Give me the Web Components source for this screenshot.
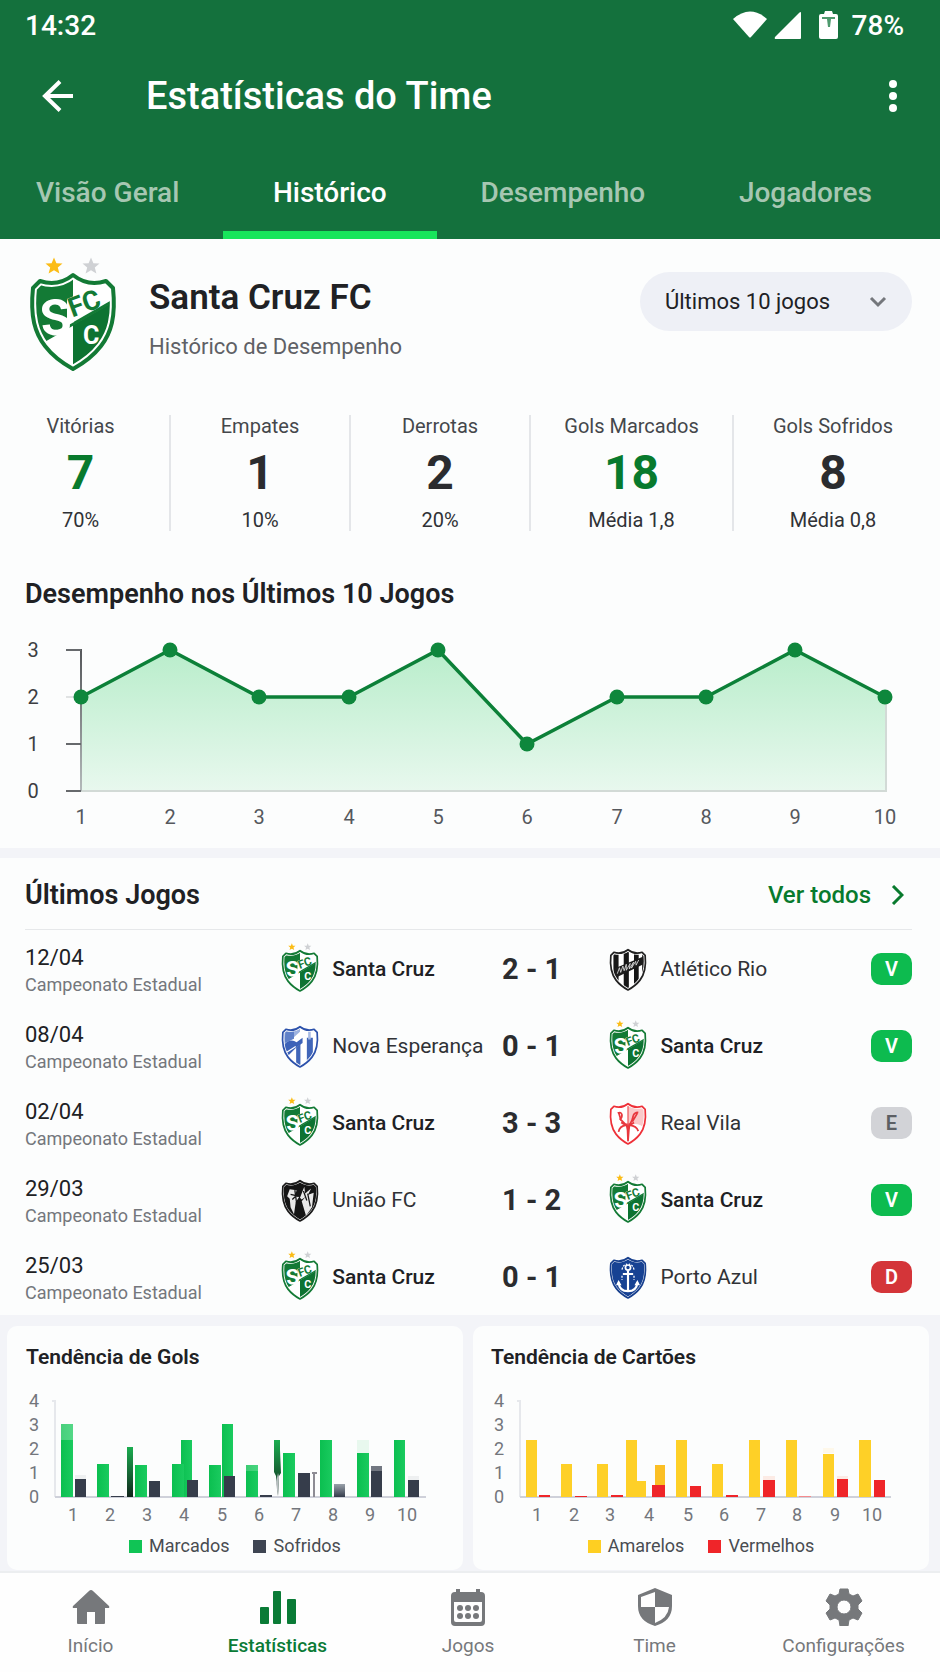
<!DOCTYPE html>
<html lang="pt-BR">
<head>
<meta charset="utf-8">
<meta name="viewport" content="width=device-width, initial-scale=1">
<title>Estatísticas do Time</title>
<style>
    body {
        margin: 0;
        background: #fcfdfd;
        color: #202124;
        font-family: Roboto, "Liberation Sans", sans-serif;
    }
</style>
</head>
<body>
<app-header heading="Estatísticas do Time" time="14:32" battery="78%"></app-header>
<main>
    <team-summary name="Santa Cruz FC" subtitle="Histórico de Desempenho"></team-summary>
    <stat-strip>
        <stat-item label="Vitórias" value="7" note="70%" highlight></stat-item>
        <stat-item label="Empates" value="1" note="10%"></stat-item>
        <stat-item label="Derrotas" value="2" note="20%"></stat-item>
        <stat-item label="Gols Marcados" value="18" note="Média 1,8" highlight></stat-item>
        <stat-item label="Gols Sofridos" value="8" note="Média 0,8"></stat-item>
    </stat-strip>
    <line-chart points="2,3,2,2,3,1,2,2,3,2">Desempenho nos Últimos 10 Jogos</line-chart>
    <match-list>Últimos Jogos</match-list>
    <trend-panel>
        <trend-chart id="goals">Tendência de Gols</trend-chart>
        <trend-chart id="cards">Tendência de Cartões</trend-chart>
    </trend-panel>
</main>
<bottom-nav></bottom-nav>

<script>
function attach(el, html) {
    const template = document.createElement('template');
    template.innerHTML = html;
    el.attachShadow({ mode: 'open' });
    el.shadowRoot.appendChild(template.content.cloneNode(true));
}

class AppHeader extends HTMLElement {
    connectedCallback() {
        if (this.shadowRoot) return;
        attach(this, `
            <style>
                :host { display: block; background: #14713d; color: #fff; }
                .status { display: flex; align-items: center; height: 50px; padding: 0 36px 0 25px; font-size: 28px; font-weight: 500; }
                .time { flex: 1; }
                .status svg { display: block; margin-right: 14px; }
                .status .signal { margin-right: 18px; }
                .bar { display: flex; align-items: center; height: 92px; padding: 0 34px 0 36px; }
                h1 { flex: 1; margin: 0 0 0 66px; font-size: 38px; font-weight: 500; }
                button { display: block; padding: 6px; border: 0; background: none; color: inherit; font: inherit; cursor: pointer; }
                button svg { display: block; }
                nav { display: flex; justify-content: space-between; height: 97px; padding: 0 68px 0 36px; }
                a { position: relative; line-height: 102px; font-size: 28px; font-weight: 500; color: #a6c7b2; text-decoration: none; }
                a[aria-current] { color: #fff; }
                a[aria-current]::after {
                    content: ""; position: absolute; left: -50px; right: -50px; bottom: 0;
                    height: 8px; background: #17e55b;
                }
            </style>
            <div class="status">
                <span class="time">${this.getAttribute('time')}</span>
                <svg class="signal" width="68" height="28" viewBox="0 0 68 28" fill="#fff" aria-hidden="true">
                    <path d="M0 8Q17-7 34 8L18 26q-1 1-2 0z"/>
                    <path d="M68 2v25q0 1-1 1H43q-2 0-1-2L66 2q2-2 2 0z"/>
                </svg>
                <svg width="19" height="28" viewBox="0 0 19 28" fill="#fff" aria-hidden="true">
                    <path d="M6 0h7l1 3h3q2 0 2 2v21q0 2-2 2H2q-2 0-2-2V5q0-2 2-2h3z"/>
                    <path d="M3 6h13v2h-4l-1 8H9L8 8H3z" fill="#4f9a6e"/>
                </svg>
                <span>${this.getAttribute('battery')}</span>
            </div>
            <div class="bar">
                <button type="button" aria-label="Voltar">
                    <svg width="32" height="32" viewBox="0 0 32 32" fill="none" stroke="#fff" stroke-width="4">
                        <path d="M31 16H3M18 1.500L3 16l15 14.500"/>
                    </svg>
                </button>
                <h1>${this.getAttribute('heading')}</h1>
                <button type="button" aria-label="Mais opções">
                    <svg width="14" height="32" viewBox="0 0 14 32" fill="#fff">
                        <circle cx="7" cy="4" r="4"/><circle cx="7" cy="16" r="4"/><circle cx="7" cy="28" r="4"/>
                    </svg>
                </button>
            </div>
            <nav>
                <a href="#geral">Visão Geral</a>
                <a href="#historico" aria-current="page">Histórico</a>
                <a href="#desempenho">Desempenho</a>
                <a href="#jogadores">Jogadores</a>
            </nav>
        `);
    }
}
customElements.define('app-header', AppHeader);

// Every crest shares the same shield, stars sit above it for Santa Cruz
const SHIELD = 'M42 18Q27 30 9 24L2 31C-1 60 4 76 14 89Q24 102 42 112Q60 102 70 89C80 76 85 60 82 31L75 24Q57 30 42 18Z';
const STAR = 'M0-8.500L2.400-2.800L8.500-2.400L3.800 1.500L5.400 7.500L0 4.200L-5.400 7.500L-3.800 1.500L-8.500-2.400L-2.400-2.800Z';

const CRESTS = {
    santacruz: {
        edge: '#137a35', base: '#fff',
        art: `
            <path d="M0 0H42V68L0 92Z" fill="#137a35"/>
            <path d="M42 68L84 44V120H42Z" fill="#0d7332"/>
            <path d="M0 91L84 43" stroke="#137a35" stroke-width="3"/>
            <path d="M36 42l7-3v26l-7 4z" fill="#fff"/>
            <g font-family="Roboto, sans-serif" font-weight="700">
                <text x="9" y="78" font-size="50" fill="#fff" transform="rotate(-6 25 60)">S</text>
                <text x="37" y="55" font-size="27" fill="#137a35" transform="rotate(-20 55 46)">FC</text>
                <text x="52" y="87" font-size="25" fill="#fff">C</text>
            </g>`
    },
    atletico: {
        edge: '#222', base: '#fff',
        art: `
            <path d="M8 0h12v120H8zM32 0h12v120H32zM56 0h11v120H56zM75 0h9v120h-9z" fill="#161616"/>
            <path d="M10 62L78 34v18L12 84z" fill="#1c1c1c"/>
            <path d="M17 74l5-14 3 11 5-15 3 11 5-15v14l9-16-2 13 10-16-5 14 10-16 1 9 6-12" stroke="#ddd" stroke-width="2" fill="none"/>`
    },
    nova: {
        edge: '#2c51ab', base: '#fff',
        art: `
            <path d="M0 0h42v30L6 62z" fill="#9db2df"/>
            <path d="M8 28h20v18l-22 10z" fill="#5f80c8"/>
            <path d="M4 62q14-18 30-8l14-10v12L34 66 12 88z" fill="#3d62b8"/>
            <path d="M33 66l10-8v60L33 108zM58 44h14v52l-14 10z" fill="#4166b9"/>
            <path d="M64 24v24" stroke="#aabce4" stroke-width="6"/>
            <path d="M10 78l22-14" stroke="#fff" stroke-width="3"/>`
    },
    vila: {
        edge: '#ee3038', base: '#fff',
        art: `
            <path d="M42 18h42v60q-20-20-42-8z" fill="#fac9c9"/>
            <path d="M18 40q8-4 10 4 0 8-4 10l14 14M66 38q-10 0-12 9-1 8-8 20M20 84q2-14 18-16h8q16 2 20 14M20 38l6 20M64 40l-12 20M26 62l14 8M56 62l-12 8" fill="none" stroke="#e8373d" stroke-width="4"/>
            <path d="M36 64h12l-2 16-2 26h-4l-1-26z" fill="#e8373d"/>
            <path d="M42 22v46" stroke="#ee5a5e" stroke-width="3"/>`
    },
    uniao: {
        edge: '#1c1c1c', base: '#151515',
        art: `
            <path d="M18 38l16 2-4 14 10 2-8 12-4 28-8-16-2-20-6-6zM46 66l12-14 16-6-4 34-14 20zM42 58l10-26 2 16 14-12-8 16-14 10z" fill="#e9e9e9"/>
            <path d="M20 50l18 4M24 62l12-12M60 48l6 30M30 40l4 30M50 42l8 22" stroke="#151515" stroke-width="3"/>`
    },
    porto: {
        edge: '#173f8d', base: '#174293',
        art: `
            <g stroke="#fff" fill="none" stroke-width="5">
                <circle cx="42" cy="41" r="6" stroke-width="4"/>
                <path d="M42 48v48M30 56h24M20 76q2 20 22 20t22-20"/>
                <path d="M28 46q2-12 12-13M56 46q-2-12-12-13M28 60v10M56 60v10" stroke-width="3" stroke-dasharray="5 3"/>
            </g>
            <path d="M14 82l6-12 7 12zM57 82l7-12 6 12z" fill="#fff"/>`
    }
};
let crestCount = 0;

class TeamCrest extends HTMLElement {
    connectedCallback() {
        if (this.shadowRoot) return;
        const kind = this.getAttribute('kind');
        const crest = CRESTS[kind];
        const clip = 'shield' + (++crestCount);
        const starred = kind === 'santacruz';
        const stars = !starred ? '' : `
            <path d="${STAR}" fill="#fbbc16" transform="translate(23 9)"/>
            <path d="${STAR}" fill="#cfd1d4" transform="translate(60 9)"/>`;
        // dark shields carry only a hairline inside the edge
        const inner = kind === 'porto' || kind === 'uniao' ? 6 : 8;
        attach(this, `
            <style>
                :host { display: block; flex: none; width: 84px; }
                svg { display: block; width: 100%; overflow: visible; }
            </style>
            <svg viewBox="${starred ? '0 0 84 114' : '0 14 84 100'}" aria-hidden="true">
                <clipPath id="${clip}"><path d="${SHIELD}"/></clipPath>
                ${stars}
                <path d="${SHIELD}" fill="${crest.base}"/>
                <g clip-path="url(#${clip})">
                    ${crest.art}
                    <path d="${SHIELD}" fill="none" stroke="#fff" stroke-width="${inner}"/>
                </g>
                <path d="${SHIELD}" fill="none" stroke="${crest.edge}" stroke-width="4" stroke-linejoin="round"/>
            </svg>
        `);
    }
}
customElements.define('team-crest', TeamCrest);

class TeamSummary extends HTMLElement {
    connectedCallback() {
        if (this.shadowRoot) return;
        attach(this, `
            <style>
                :host { display: flex; align-items: flex-start; padding: 18px 28px 0 31px; }
                .text { flex: 1; padding: 21px 0 0 34px; }
                h2 { margin: 0; font-size: 35px; line-height: 40px; font-weight: 600; }
                p { margin: 17px 0 0; font-size: 22px; line-height: 24px; color: #5f6166; }
                .period { position: relative; margin-top: 15px; }
                select {
                    appearance: none; display: block; width: 272px; height: 59px; padding: 0 60px 0 25px;
                    border: 0; border-radius: 30px; background: #eef0f6; color: #202124;
                    font-family: inherit; font-size: 22px;
                }
                .period svg { position: absolute; right: 25px; top: 24px; pointer-events: none; }
            </style>
            <team-crest kind="santacruz"></team-crest>
            <div class="text">
                <h2>${this.getAttribute('name')}</h2>
                <p>${this.getAttribute('subtitle')}</p>
            </div>
            <div class="period">
                <select aria-label="Período"><option>Últimos 10 jogos</option></select>
                <svg width="18" height="12" viewBox="0 0 18 12" fill="none" stroke="#74777c" stroke-width="3"><path d="M2 2l7 7 7-7"/></svg>
            </div>
        `);
    }
}
customElements.define('team-summary', TeamSummary);

class StatStrip extends HTMLElement {
    constructor() {
        super();
        attach(this, `
            <style>
                :host { display: grid; grid-template-columns: 171fr 180fr 180fr 203fr 206fr; margin-top: 44px; }
                ::slotted(:not(:last-child)) { border-right: 2px solid #e4e6e9; }
                ::slotted(:first-child), ::slotted(:last-child) { padding-right: 8px; }
            </style>
            <slot></slot>
        `);
    }
}
customElements.define('stat-strip', StatStrip);

class StatItem extends HTMLElement {
    connectedCallback() {
        if (this.shadowRoot) return;
        attach(this, `
            <style>
                :host { display: block; text-align: center; font-size: 20px; line-height: 22px; }
                .label { color: #44474b; }
                .value { margin: 8px 0; font-size: 48px; line-height: 56px; font-weight: 700; color: #2b2c2f; }
                :host([highlight]) .value { color: #087a2d; }
                .note { color: #303236; }
            </style>
            <div class="label">${this.getAttribute('label')}</div>
            <div class="value">${this.getAttribute('value')}</div>
            <div class="note">${this.getAttribute('note')}</div>
        `);
    }
}
customElements.define('stat-item', StatItem);

class LineChart extends HTMLElement {
    connectedCallback() {
        if (this.shadowRoot) return;
        const values = this.getAttribute('points').split(',').map(Number);
        const xs = values.map((v, i) => Math.floor(81 + i * 804 / (values.length - 1)));
        const y = v => 161 - v * 47;
        const line = values.map((v, i) => `${xs[i]},${y(v)}`).join(' ');
        attach(this, `
            <style>
                :host { display: block; }
                h2 { margin: 47px 25px 20px; font-size: 27px; line-height: 32px; font-weight: 600; }
                svg { display: block; width: 100%; }
                text { font-size: 20px; text-anchor: middle; fill: #55585d; }
                .scale text { fill: #3c3e42; }
            </style>
            <h2><slot></slot></h2>
            <svg viewBox="0 0 940 218">
                <defs>
                    <linearGradient id="area" x1="0" y1="0" x2="0" y2="1">
                        <stop offset="0" stop-color="#b9edcb"/><stop offset="1" stop-color="#e8f8ee"/>
                    </linearGradient>
                    <linearGradient id="axis" x1="0" y1="0" x2="0" y2="1">
                        <stop offset="0" stop-color="#55575a"/><stop offset="1" stop-color="#b4babb"/>
                    </linearGradient>
                </defs>
                <polygon points="81,161 ${line} 885,161" fill="url(#area)"/>
                <path d="M81 161H886V67" fill="none" stroke="#d2dad6" stroke-width="2"/>
                <rect x="80" y="19" width="2" height="142" fill="url(#axis)"/>
                <path d="M66 20h15M66 114h15M66 161h15" stroke="#66696c" stroke-width="2"/>
                <path d="M66 67h15" stroke="#c5c9ca"/>
                <g class="scale">${[3, 2, 1, 0].map(v => `<text x="33" y="${y(v) + 7}">${v}</text>`).join('')}</g>
                ${xs.map((x, i) => `<text x="${x}" y="194">${i + 1}</text>`).join('')}
                <polyline points="${line}" fill="none" stroke="#0c8038" stroke-width="3.500"/>
                ${values.map((v, i) => `<circle cx="${xs[i]}" cy="${y(v)}" r="7.500" fill="#0e873c"/>`).join('')}
            </svg>
        `);
    }
}
customElements.define('line-chart', LineChart);

const MATCHES = [
    { date: '12/04', home: ['santacruz', 'Santa Cruz'], score: '2 - 1', away: ['atletico', 'Atlético Rio'], result: 'V' },
    { date: '08/04', home: ['nova', 'Nova Esperança'], score: '0 - 1', away: ['santacruz', 'Santa Cruz'], result: 'V' },
    { date: '02/04', home: ['santacruz', 'Santa Cruz'], score: '3 - 3', away: ['vila', 'Real Vila'], result: 'E' },
    { date: '29/03', home: ['uniao', 'União FC'], score: '1 - 2', away: ['santacruz', 'Santa Cruz'], result: 'V' },
    { date: '25/03', home: ['santacruz', 'Santa Cruz'], score: '0 - 1', away: ['porto', 'Porto Azul'], result: 'D' }
];

class MatchList extends HTMLElement {
    team([kind, name]) {
        const own = kind === 'santacruz' ? ' own' : '';
        return `<div class="team${own}"><team-crest kind="${kind}"></team-crest>${name}</div>`;
    }

    connectedCallback() {
        if (this.shadowRoot) return;
        attach(this, `
            <style>
                :host { display: block; padding: 0 28px 0 25px; border-top: 10px solid #f3f4f8; }
                header { display: flex; justify-content: space-between; align-items: center; height: 69px; padding-top: 2px; border-bottom: 1px solid #e6e8ea; }
                h2 { margin: 0; font-size: 27px; line-height: 32px; font-weight: 600; }
                a { display: flex; align-items: center; gap: 20px; padding-right: 8px; font-size: 24px; line-height: 32px; font-weight: 500; color: #087a2d; text-decoration: none; }
                table { width: 100%; table-layout: fixed; border-collapse: collapse; }
                td { height: 77px; padding: 0; font-size: 21px; }
                .when { width: 29%; }
                .home { width: 24%; }
                .goals { width: 13%; }
                .end { width: 5%; }
                time { display: block; padding-top: 4px; font-size: 22px; line-height: 28px; }
                small { display: block; font-size: 18px; line-height: 26px; color: #74777c; }
                .team { display: flex; align-items: center; gap: 14px; white-space: nowrap; color: #303236; }
                .own { font-weight: 500; color: #202124; }
                team-crest { width: 36px; margin-top: 2px; }
                team-crest[kind="santacruz"] { margin-top: -3px; }
                .score { padding-left: 7px; font-size: 29px; font-weight: 700; color: #2b2c2f; white-space: nowrap; }
                .badge {
                    display: block; width: 41px; margin-left: auto; border-radius: 10px; text-align: center;
                    font-size: 20px; line-height: 32px; font-weight: 600; color: #fff; background: #0dbb4f;
                }
                .badge.E { background: #d2d3d7; color: #5c5f64; }
                .badge.D { background: #d43539; }
            </style>
            <header>
                <h2><slot></slot></h2>
                <a href="#jogos">Ver todos
                    <svg width="13" height="20" viewBox="0 0 13 20" fill="none" stroke="#087a2d" stroke-width="3"><path d="M2 1l9 9-9 9"/></svg>
                </a>
            </header>
            <table>
                <colgroup><col class="when"><col class="home"><col class="goals"><col><col class="end"></colgroup>
                ${MATCHES.map(m => `
                    <tr>
                        <td><time>${m.date}</time><small>Campeonato Estadual</small></td>
                        <td>${this.team(m.home)}</td>
                        <td class="score">${m.score}</td>
                        <td>${this.team(m.away)}</td>
                        <td><span class="badge ${m.result}">${m.result}</span></td>
                    </tr>`).join('')}
            </table>
        `);
    }
}
customElements.define('match-list', MatchList);

class TrendPanel extends HTMLElement {
    constructor() {
        super();
        attach(this, `
            <style>
                :host {
                    display: grid; grid-template-columns: 1fr 1fr; gap: 10px;
                    padding: 11px 11px 1px 7px; background: #f3f4f8;
                }
            </style>
            <slot></slot>
        `);
    }
}
customElements.define('trend-panel', TrendPanel);

class TrendChart extends HTMLElement {
    // bars: [x, top, width, colour], drawn in order down to the zero line
    set data({ axis, labels, legend, bars, extra }) {
        const zero = 128;
        attach(this, `
            <style>
                :host { display: block; padding: 19px 0 14px; border-radius: 10px; background: #fcfdfd; }
                h3 { margin: 0 20px 0 ${axis - 29}px; font-size: 21px; line-height: 24px; font-weight: 600; }
                svg { display: block; width: 100%; }
                text { font-size: 18px; text-anchor: middle; fill: #73767c; }
                ul { display: flex; justify-content: center; gap: 24px; margin: 0; padding: 0; list-style: none; font-size: 18px; line-height: 20px; color: #494c51; }
                li { display: flex; align-items: center; gap: 7px; }
                i { width: 13px; height: 13px; }
            </style>
            <h3><slot></slot></h3>
            <svg viewBox="0 0 456 167">
                <defs>
                    <linearGradient id="green"><stop offset="0" stop-color="#0bbf50"/><stop offset="1" stop-color="#1acb5f"/></linearGradient>
                    <linearGradient id="fade" x1="0" y1="0" x2="0" y2="1"><stop offset="0" stop-color="#9aa2ab"/><stop offset="1" stop-color="#343c4b"/></linearGradient>
                    <linearGradient id="shade" x1="0" y1="0" x2="0" y2="1"><stop offset="0" stop-color="#1bad50"/><stop offset=".6" stop-color="#155e31"/><stop offset="1" stop-color="#10241a"/></linearGradient>
                </defs>
                <path d="M${axis - 3} 32h3V${zero}" fill="none" stroke="#e6e8ec" stroke-width="2"/>
                <path d="M${axis} ${zero}h371" stroke="#cfd1da" stroke-width="2"/>
                ${bars.map(([x, top, w, fill]) => `<rect x="${x}" y="${top}" width="${w}" height="${zero - top}" fill="${fill}"/>`).join('')}
                ${extra || ''}
                ${[4, 3, 2, 1, 0].map(v => `<text x="${axis - 21}" y="${zero - v * 24 + 6}">${v}</text>`).join('')}
                ${labels.map((x, i) => `<text x="${x}" y="152">${i + 1}</text>`).join('')}
            </svg>
            <ul>${legend.map(([name, color]) => `<li><i style="background:${color}"></i>${name}</li>`).join('')}</ul>
        `);
    }
}
customElements.define('trend-chart', TrendChart);

const G = 'url(#green)', K = '#363d4b', Y = '#fed027', R = '#ef2529';

document.querySelector('#goals').data = {
    axis: 48,
    labels: [66, 103, 140, 177, 215, 252, 289, 326, 363, 400],
    legend: [['Marcados', '#10c455'], ['Sofridos', '#3e4552']],
    bars: [
        [54, 55, 12, G], [68, 110, 11, K],
        [90, 95, 12, G], [104, 127, 13, K],
        [120, 78, 6, 'url(#shade)'], [128, 96, 12, G], [142, 112, 11, K],
        [174, 71, 11, G], [165, 95, 12, G], [180, 111, 11, K],
        [215, 55, 11, G], [202, 96, 12, G], [217, 107, 11, K],
        [239, 96, 12, G], [253, 126, 12, K],
        [276, 84, 12, G], [291, 104, 12, K],
        [313, 71, 12, G], [327, 115, 11, 'url(#fade)'],
        [350, 84, 12, G], [364, 97, 11, K],
        [387, 71, 11, G], [401, 111, 11, K]
    ],
    extra: `
        <path d="M54 55h12v16H54z" fill="#fff" opacity=".25"/>
        <path d="M350 71h12v13h-12z" fill="#e8f8ee"/>
        <path d="M68 106h11v4H68zM401 107h11v4h-11z" fill="#eef0f1"/>
        <path d="M364 97h11v5h-11z" fill="#fff" opacity=".3"/>
        <path d="M239 96h12v6h-12z" fill="#fff" opacity=".2"/>
        <path d="M267 71h6v10l1 23-2 3-1 20-2-20-2-4z" fill="url(#shade)"/>
        <path d="M271 104l1 4-1 19-2-13z" fill="#b9bfc1"/>
        <path d="M305 104h5M307 104v24" stroke="#8d8c94" stroke-width="2"/>`
};

document.querySelector('#cards').data = {
    axis: 47,
    labels: [64, 101, 137, 176, 215, 251, 288, 324, 362, 399],
    legend: [['Amarelos', '#fecf22'], ['Vermelhos', '#ef2529']],
    bars: [
        [53, 71, 11, Y], [66, 126, 11, R],
        [88, 95, 11, Y], [102, 127, 12, R],
        [124, 95, 11, Y], [138, 126, 12, R],
        [153, 71, 11, Y], [164, 112, 9, Y], [182, 96, 10, '#fbbf24'], [179, 116, 13, R],
        [203, 71, 11, Y], [217, 117, 11, R],
        [239, 95, 11, Y], [253, 126, 12, R],
        [276, 71, 11, Y], [290, 111, 12, R],
        [313, 71, 11, Y], [326, 127, 12, '#f58b8d'],
        [350, 85, 11, Y], [364, 110, 11, R],
        [386, 71, 12, Y], [401, 111, 11, R]
    ],
    extra: `
        <path d="M350 79h11v5h-11z" fill="#fef8ea"/>
        <path d="M290 107h12v4h-12zM364 107h11v3h-11z" fill="#fcebe5"/>`
};

class BottomNav extends HTMLElement {
    constructor() {
        super();
        attach(this, `
            <style>
                :host { display: block; background: #fefefe; border-top: 2px solid #eceef0; }
                nav { display: grid; grid-template-columns: 181fr 193fr 188fr 185fr 193fr; }
                a { display: flex; flex-direction: column; align-items: center; padding: 15px 0 14px; color: #76787b; font-size: 19px; line-height: 24px; text-decoration: none; }
                a[aria-current] { color: #0a7b36; font-weight: 500; }
                svg { width: 38px; height: 38px; margin-bottom: 8px; fill: currentColor; }
            </style>
            <nav>
                <a href="#inicio">
                    <svg viewBox="0 0 38 38"><path d="M19 2Q20 2 21 3L37 18q1 2-1 2h-3v15q0 1-1 1h-9V24h-8v12H6q-1 0-1-1V20H2q-2 0-1-2L17 3q1-1 2-1z"/></svg>
                    Início
                </a>
                <a href="#estatisticas" aria-current="page">
                    <svg viewBox="0 0 38 38"><rect x="1" y="19" width="9" height="17" rx="1"/><rect x="14" y="3" width="8" height="33" rx="1"/><rect x="28" y="11" width="9" height="25" rx="1"/></svg>
                    Estatísticas
                </a>
                <a href="#jogos">
                    <svg viewBox="0 0 38 38">
                        <path fill-rule="evenodd" d="M7 1h4v3h16V1h4v3h1q4 0 4 4v26q0 4-4 4H6q-4 0-4-4V8q0-4 4-4h1zM5 14v18q0 2 2 2h24q2 0 2-2V14z"/>
                        <circle cx="11" cy="20" r="3"/><circle cx="19" cy="20" r="3"/><circle cx="27" cy="20" r="3"/>
                        <circle cx="11" cy="28" r="3"/><circle cx="19" cy="28" r="3"/><circle cx="27" cy="28" r="3"/>
                    </svg>
                    Jogos
                </a>
                <a href="#time">
                    <svg viewBox="0 0 38 38"><path fill-rule="evenodd" d="M19 0L36 7v11q0 15-17 20Q2 33 2 18V7zM19 4L5 9v10h14zM19 19h14q-1 11-14 16z"/></svg>
                    Time
                </a>
                <a href="#configuracoes">
                    <svg viewBox="0 0 38 38"><path fill-rule="evenodd" d="M15 1h8l1 5 4 2 5-2 4 7-4 4v4l4 4-4 7-5-2-4 2-1 6h-8l-1-6-4-2-5 2-4-7 4-4v-4L1 13l4-7 5 2 4-2zM19 12a7 7 0 1 0 0 14 7 7 0 1 0 0-14z" stroke="currentColor" stroke-linejoin="round"/></svg>
                    Configurações
                </a>
            </nav>
        `);
    }
}
customElements.define('bottom-nav', BottomNav);

// The shield icon's opposite quarters stay open: top left and bottom right
</script>
</body>
</html>
